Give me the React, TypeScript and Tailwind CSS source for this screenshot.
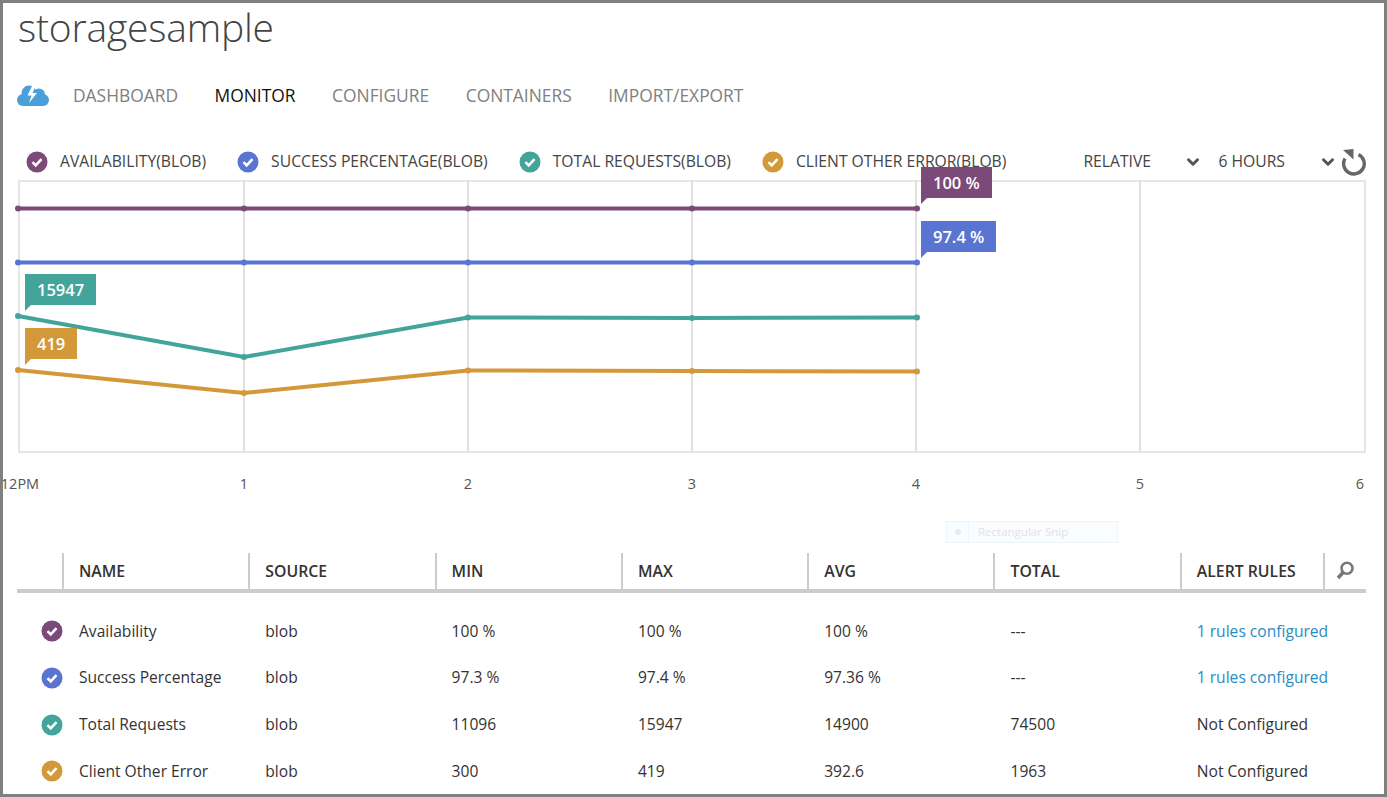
import { ChevronDown } from "lucide-react";

const font = "font-['Open_Sans','Noto_Sans',sans-serif]";

const metrics = [
  { name: "Availability", color: "#7b4a78", min: "100 %", max: "100 %", avg: "100 %", total: "---", alert: "1 rules configured", link: true },
  { name: "Success Percentage", color: "#5a75d1", min: "97.3 %", max: "97.4 %", avg: "97.36 %", total: "---", alert: "1 rules configured", link: true },
  { name: "Total Requests", color: "#43a49c", min: "11096", max: "15947", avg: "14900", total: "74500", alert: "Not Configured", link: false },
  { name: "Client Other Error", color: "#d3983a", min: "300", max: "419", avg: "392.6", total: "1963", alert: "Not Configured", link: false },
];

const legend = [
  { label: "AVAILABILITY(BLOB)", color: "#7b4a78" },
  { label: "SUCCESS PERCENTAGE(BLOB)", color: "#5a75d1" },
  { label: "TOTAL REQUESTS(BLOB)", color: "#43a49c" },
  { label: "CLIENT OTHER ERROR(BLOB)", color: "#d3983a" },
];

const series = [
  { color: "#7b4a78", pts: [[15, 28.5], [241, 28.5], [465, 28.5], [689, 28.5], [914, 28.5]] },
  { color: "#5a75d1", pts: [[15, 82.5], [241, 82.5], [465, 82.5], [689, 82.5], [914, 82.5]] },
  { color: "#43a49c", pts: [[15, 136], [241, 177], [465, 137.5], [689, 138], [914, 137.5]] },
  { color: "#d3983a", pts: [[15, 190], [241, 213], [465, 190.5], [689, 191], [914, 191.5]] },
];

const CheckDot = ({ color }: { color: string }) => (
  <svg width="22" height="22" viewBox="0 0 22 22" className="shrink-0">
    <circle cx="11" cy="11" r="10.5" fill={color} />
    <path d="M6.5 11.2l3.2 3.2 5.8-6.2" fill="none" stroke="#fff" strokeWidth="2.6" />
  </svg>
);

const Callout = ({ text, color, className }: { text: string; color: string; className: string }) => (
  <div className={`absolute ${className}`}>
    <div className="flex h-[31px] items-center px-3 pt-[2px] text-[16.5px] font-semibold text-white" style={{ backgroundColor: color }}>
      {text}
    </div>
    <svg width="6" height="6" viewBox="0 0 6 6" className="block">
      <path d="M0 0h6L0 6z" fill={color} />
    </svg>
  </div>
);

const App = () => {
  return (
    <div className={`${font} box-border h-[797px] w-[1387px] overflow-hidden border-[3px] border-[#808080] bg-white`}>
      <h1 className="ml-[15px] h-[50px] text-[39px] leading-[48px] font-light tracking-[-0.2px] text-[#444]">storagesample</h1>

      <nav className="mt-[27px] flex h-[30px] items-center pl-[14px] text-[17.4px] text-[#808080]">
        <svg width="32" height="21" viewBox="0 0 32 21" className="mr-[24px]">
          <circle cx="12" cy="8" r="7.5" fill="#4a9fd8" />
          <circle cx="22" cy="9.5" r="6" fill="#4a9fd8" />
          <rect x="0" y="9" width="32" height="12" rx="6" fill="#4a9fd8" />
          <path d="M15.5 0l-5 10.5h4L12 18l8-10h-4.5L19 0z" fill="#fff" />
        </svg>
        <span>DASHBOARD</span>
        <span className="ml-[36.5px] text-[#111]">MONITOR</span>
        <span className="ml-[36.5px]">CONFIGURE</span>
        <span className="ml-[36.5px]">CONTAINERS</span>
        <span className="ml-[36.5px]">IMPORT/EXPORT</span>
      </nav>

      <div className="mt-[37px] flex h-[30px] items-center pl-[23px] text-[15.7px] text-[#444]">
        {legend.map((item) => (
          <div key={item.label} className="mr-[31px] flex items-center gap-[12px]">
            <CheckDot color={item.color} />
            <span className="whitespace-nowrap">{item.label}</span>
          </div>
        ))}
        <span className="ml-[46px] w-[101px] shrink-0">RELATIVE</span>
        <ChevronDown size={18} strokeWidth={4} className="shrink-0 text-[#555]" />
        <span className="ml-[16px] w-[101px] shrink-0 whitespace-nowrap">6 HOURS</span>
        <ChevronDown size={18} strokeWidth={4} className="shrink-0 text-[#555]" />
        <svg width="26" height="28" viewBox="0 0 26 28" className="ml-[4px] shrink-0">
          <path d="M17.5 6.4A10.3 10.3 0 1 1 4 10.5" fill="none" stroke="#666" strokeWidth="3.4" />
          <path d="M2 2l10.5-1v10.5z" fill="#666" />
        </svg>
      </div>

      <div className="relative mt-[3px] h-[274px]">
        <svg width="1381" height="274" viewBox="0 0 1381 274" className="block">
          <rect x="16" y="1" width="1346" height="271" fill="none" stroke="#e6e6e6" strokeWidth="2" />
          {[241, 465, 689, 913, 1137].map((x) => (
            <line key={x} x1={x} x2={x} y1="1" y2="272" stroke="#e0e0e0" strokeWidth="2" />
          ))}
          {series.map((s) => (
            <g key={s.color}>
              <polyline points={s.pts.map((p) => p.join(",")).join(" ")} fill="none" stroke={s.color} strokeWidth="4" />
              {s.pts.map((p) => (
                <circle key={p[0]} cx={p[0]} cy={p[1]} r="3" fill={s.color} />
              ))}
            </g>
          ))}
        </svg>
        <Callout text="100 %" color="#7b4a78" className="left-[918px] top-[-13px]" />
        <Callout text="97.4 %" color="#5a75d1" className="left-[918px] top-[41px]" />
        <Callout text="15947" color="#43a49c" className="left-[22px] top-[94px]" />
        <Callout text="419" color="#d3983a" className="left-[22px] top-[148px]" />
      </div>

      <div className="relative mt-[19px] h-[22px] text-[14.5px] leading-[22px] text-[#555]">
        {["12PM", "1", "2", "3", "4", "5", "6"].map((t, i) => (
          <span
            key={t}
            className="absolute -translate-x-1/2"
            style={{ left: i === 6 ? 1357 : i === 0 ? 17 : 17 + i * 224 }}
          >
            {t}
          </span>
        ))}
      </div>

      <div className="mt-[26px] ml-[943px] flex h-[22px] w-[172px] items-center border border-[#ebf6fc] bg-[#fafdff] text-[11.5px] text-[#e2e2e2]">
        <span className="flex h-full w-[22px] items-center justify-center border-r border-[#ebf6fc]">
          <span className="h-[6px] w-[6px] rounded-full bg-[#e4ecf0]" />
        </span>
        <span className="ml-[9px]">Rectangular Snip</span>
      </div>

      <div className="mt-[10px] ml-[14px] w-[1349px]">
        <div className="grid h-[40px] grid-cols-[45px_repeat(6,186.3px)_143px_43px] border-b-[4px] border-[#cccccc] text-[15.8px] font-semibold text-[#333]">
          <div />
          {["NAME", "SOURCE", "MIN", "MAX", "AVG", "TOTAL", "ALERT RULES"].map((h) => (
            <div key={h} className="whitespace-nowrap border-l-2 border-[#cccccc] pl-[15px] leading-[36px]">
              {h}
            </div>
          ))}
          <div className="flex items-center border-l-2 border-[#cccccc] pl-[11px]">
            <svg width="20" height="22" viewBox="0 0 20 22">
              <circle cx="11" cy="8.3" r="5.5" fill="none" stroke="#777" strokeWidth="2.6" />
              <path d="M7 12.5L2 18" stroke="#777" strokeWidth="3.6" />
            </svg>
          </div>
        </div>
        <div className="mt-[15px]">
          {metrics.map((m) => (
            <div key={m.name} className="grid h-[46.67px] grid-cols-[45px_repeat(6,186.3px)_143px_43px] items-center text-[15.6px] text-[#333]">
              <div className="pl-[24px]">
                <CheckDot color={m.color} />
              </div>
              <div className="pl-[17px]">{m.name}</div>
              <div className="pl-[17px]">blob</div>
              <div className="pl-[17px]">{m.min}</div>
              <div className="pl-[17px]">{m.max}</div>
              <div className="pl-[17px]">{m.avg}</div>
              <div className="pl-[17px]">{m.total}</div>
              <div className={`col-span-2 pl-[17px] ${m.link ? "text-[#2a8cc4]" : ""}`}>{m.alert}</div>
            </div>
          ))}
        </div>
      </div>
    </div>
  );
};

export default App;
